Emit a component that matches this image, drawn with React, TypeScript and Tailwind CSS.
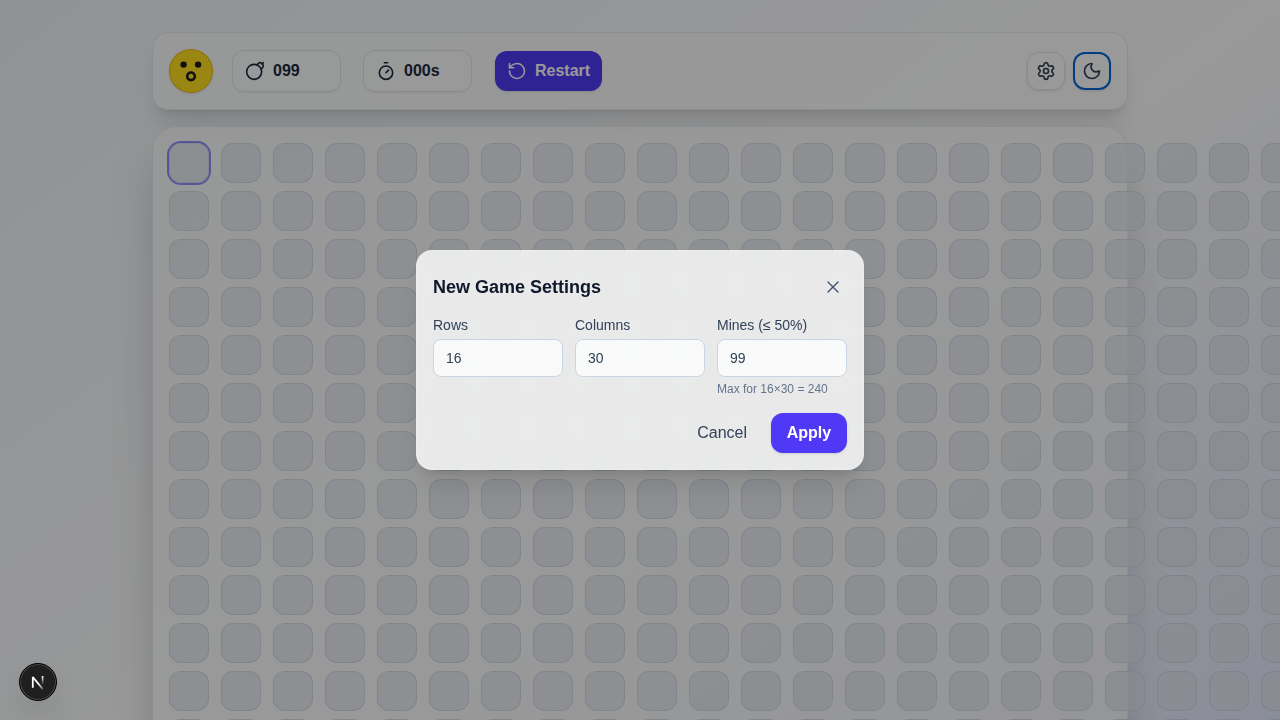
import React from "react";
import { Bomb, Moon, RotateCcw, Settings, Timer, X } from "lucide-react";

const ROWS = 16;
const COLS = 30;
const MINES = 99;

function Face() {
  return (
    <div className="size-11 shrink-0 rounded-full border border-yellow-500/70 bg-yellow-300 shadow-sm">
      <svg viewBox="0 0 42 42" className="size-full">
        <circle cx="13.6" cy="14.6" r="3.2" fill="#1c1c1c" />
        <circle cx="28.1" cy="14.6" r="3.2" fill="#1c1c1c" />
        <circle cx="21" cy="26.3" r="3.8" fill="none" stroke="#1c1c1c" strokeWidth="2.6" />
      </svg>
    </div>
  );
}

function Stat({ icon, value }: { icon: React.ReactNode; value: string }) {
  return (
    <div className="flex h-[42px] w-[109px] items-center gap-2 rounded-xl border border-slate-200 bg-white/70 px-3 font-semibold tabular-nums text-slate-800 shadow-xs">
      {icon}
      <span>{value}</span>
    </div>
  );
}

function Header() {
  return (
    <header className="flex items-center justify-between rounded-2xl border border-slate-200/80 bg-white/70 p-4 shadow-xl">
      <div className="flex items-center">
        <Face />
        <div className="ml-[19px]">
          <Stat icon={<Bomb size={20} strokeWidth={1.9} />} value={String(MINES).padStart(3, "0")} />
        </div>
        <div className="ml-[22px]">
          <Stat icon={<Timer size={20} strokeWidth={1.9} />} value="000s" />
        </div>
        <button className="ml-[23px] flex h-10 w-[107px] items-center gap-2 rounded-xl bg-indigo-600 px-3 font-semibold text-white shadow-sm">
          <RotateCcw size={20} strokeWidth={1.9} className="shrink-0" />
          Restart
        </button>
      </div>
      <div className="flex items-center gap-2">
        <button className="flex size-[38px] items-center justify-center rounded-xl border border-slate-200 bg-white/70 text-slate-700 shadow-sm">
          <Settings size={20} strokeWidth={2} />
        </button>
        <button className="flex size-[38px] items-center justify-center rounded-xl border-2 border-[#0068d6] bg-white/70 text-slate-700 shadow-sm">
          <Moon size={20} strokeWidth={2} />
        </button>
      </div>
    </header>
  );
}

function Board() {
  return (
    <section className="flex flex-col gap-2 rounded-3xl border border-slate-200/80 bg-white/70 p-4 shadow-2xl">
      {Array.from({ length: ROWS }, (_, r) => (
        <div key={r} className="flex gap-3">
          {Array.from({ length: COLS }, (_, c) => (
            <div
              key={c}
              className={
                r === 0 && c === 0
                  ? "size-10 shrink-0 rounded-xl border border-slate-300/70 bg-slate-200/70 ring-2 ring-indigo-500/70"
                  : "size-10 shrink-0 rounded-xl border border-slate-300/70 bg-slate-200/70"
              }
            />
          ))}
        </div>
      ))}
    </section>
  );
}

function Field({ label, value, hint }: { label: string; value: number; hint?: string }) {
  return (
    <label className="flex flex-col text-sm text-slate-700">
      <span>{label}</span>
      <input
        readOnly
        value={value}
        className="mt-1 h-[38px] w-full rounded-lg border border-slate-300 bg-white/75 px-3 text-sm outline-none"
      />
      {hint && <span className="mt-1 whitespace-nowrap text-xs text-slate-500">{hint}</span>}
    </label>
  );
}

function SettingsDialog() {
  return (
    <div className="fixed inset-0 flex items-center justify-center bg-black/40">
      <div className="w-[448px] rounded-2xl border border-white/20 bg-white/80 p-4 shadow-xl backdrop-blur-md">
        <div className="mb-2 flex h-10 items-center justify-between">
          <h2 className="text-lg font-semibold text-slate-900">New Game Settings</h2>
          <button className="p-1 pb-[5px] text-slate-600">
            <X size={20} strokeWidth={1.6} />
          </button>
        </div>
        <div className="grid grid-cols-3 gap-3">
          <Field label="Rows" value={ROWS} />
          <Field label="Columns" value={COLS} />
          <Field label="Mines (≤ 50%)" value={MINES} hint="Max for 16×30 = 240" />
        </div>
        <div className="mt-4 flex justify-end gap-2">
          <button className="h-10 px-4 text-slate-700">Cancel</button>
          <button className="h-10 w-[76px] rounded-xl bg-indigo-600 font-semibold text-white shadow-sm">
            Apply
          </button>
        </div>
      </div>
    </div>
  );
}

function DevBadge() {
  return (
    <div className="fixed bottom-[19px] left-[19px] flex size-[38px] items-center justify-center rounded-full border border-black bg-[#1f1f1f] shadow-[inset_0_0_0_1px_#4a4a4a,0_16px_32px_-8px_rgba(0,0,0,0.24)]">
      <svg width="36" height="36" viewBox="0 0 36 36" fill="none">
        <defs>
          <linearGradient id="stem" x1="0" y1="12" x2="0" y2="21" gradientUnits="userSpaceOnUse">
            <stop stopColor="#fff" />
            <stop offset="1" stopColor="#fff" stopOpacity="0" />
          </linearGradient>
          <linearGradient id="diagonal" x1="19" y1="19" x2="24" y2="25.5" gradientUnits="userSpaceOnUse">
            <stop stopColor="#fff" />
            <stop offset="1" stopColor="#fff" stopOpacity="0.2" />
          </linearGradient>
        </defs>
        <path d="M12.8 23.7V13L22.8 25.1" stroke="url(#diagonal)" strokeWidth="1.8" strokeLinejoin="bevel" />
        <path d="M22.6 12v9" stroke="url(#stem)" strokeWidth="1.7" />
      </svg>
    </div>
  );
}

export default function App() {
  return (
    <div className="h-screen overflow-hidden font-['Liberation_Sans',Arial,sans-serif]">
      <div className="h-[952px] bg-linear-to-br from-slate-100 via-white to-indigo-100">
        <main className="mx-auto flex max-w-5xl flex-col gap-4 px-6 py-8">
          <Header />
          <Board />
        </main>
      </div>
      <SettingsDialog />
      <DevBadge />
    </div>
  );
}
